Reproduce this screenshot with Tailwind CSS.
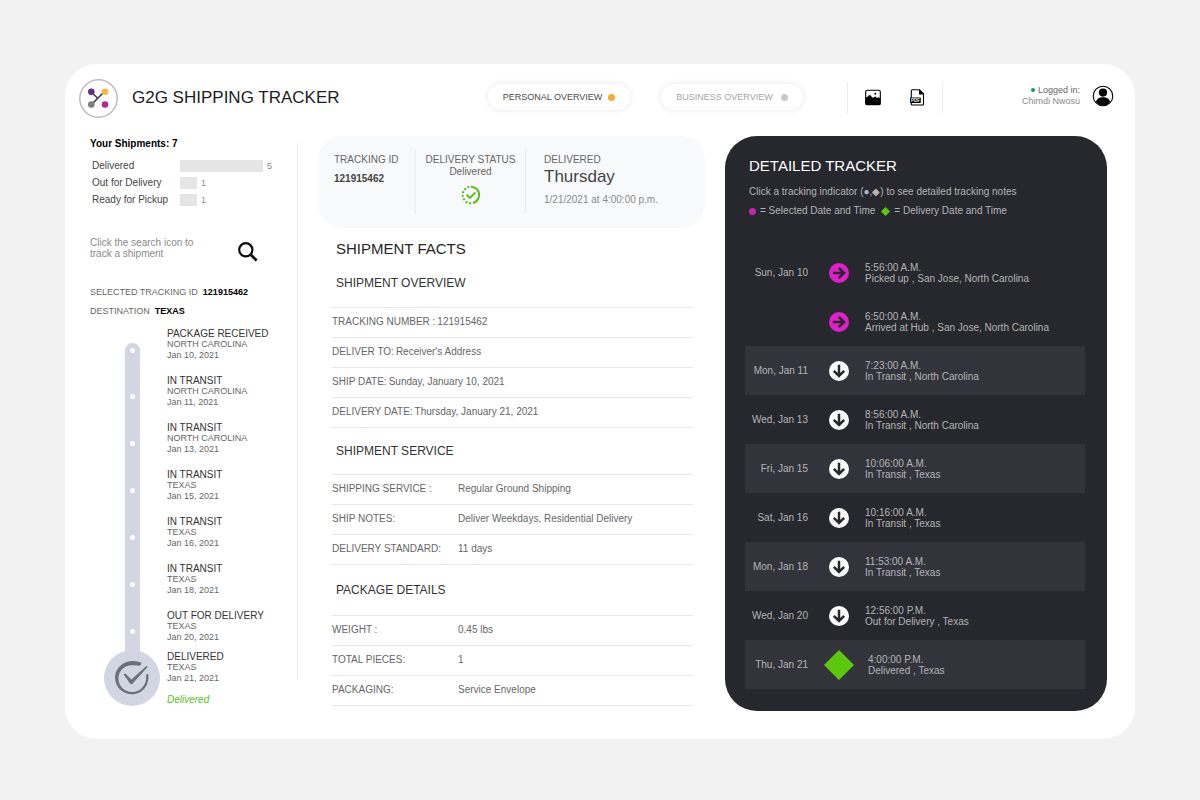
<!DOCTYPE html>
<html lang="en">
<head>
<meta charset="utf-8">
<meta name="viewport" content="width=device-width, initial-scale=1">
<title>G2G Shipping Tracker</title>
<script src="https://cdn.jsdelivr.net/npm/@tailwindcss/browser@4"></script>
</head>
<body class="min-h-screen bg-[#f2f2f2] px-[65px] py-16 font-['Liberation_Sans',Arial,sans-serif] text-[10px] leading-3 text-[#666]">
<svg class="hidden" aria-hidden="true">
  <symbol id="arrow" viewBox="0 0 20 20"><circle cx="10" cy="10" r="10" fill="currentColor"/><path d="M10 3.800V15M4.800 9.800l5.200 5.200 5.200-5.200" fill="none" stroke="#27282d" stroke-width="2.500"/></symbol>
</svg>
<div class="rounded-[32px] bg-white pb-7">
  <header class="mb-1 flex h-[68px] items-center pr-[21px] pl-[14px]">
    <div class="flex w-[409px] shrink-0 items-center gap-[14px]">
      <svg class="size-[39px]" viewBox="0 0 39 39" fill="none" aria-hidden="true">
        <circle cx="19.500" cy="19.500" r="18.700" fill="#fff" stroke="#bdbdc0" stroke-width="1.500"/>
        <path d="M12 13l6.500 6M25.500 12.500L12.500 25.500" stroke="#3d3d46" stroke-width="1.600"/>
        <circle cx="12.300" cy="12.800" r="3.300" fill="#5d2f91"/><circle cx="26" cy="12.800" r="3.300" fill="#fbb540"/>
        <circle cx="12.300" cy="25.500" r="3.300" fill="#7c7c80"/><circle cx="26" cy="25.500" r="3.300" fill="#b02a91"/>
      </svg>
      <h1 class="text-[17px] leading-5 text-[#1c1c1c]">G2G SHIPPING TRACKER</h1>
    </div>
    <nav class="-mt-0.5 flex gap-[31px] text-[9px]">
      <button class="flex h-[26px] w-[142px] items-center justify-center gap-1.5 rounded-full bg-white text-[#4a4a4a] shadow-[0_0_6px_rgba(0,0,0,0.10)]">PERSONAL OVERVIEW<span class="size-[7px] rounded-full bg-[#f9a933]"></span></button>
      <button class="flex h-[26px] w-[142px] items-center justify-center gap-2 rounded-full bg-white text-[#a5a5a8] shadow-[0_0_6px_rgba(0,0,0,0.10)]">BUSINESS OVERVIEW<span class="size-[7px] rounded-full bg-[#c8c8c8]"></span></button>
    </nav>
    <div class="ml-11 flex h-8 w-24 items-center justify-center gap-6 border-x border-[#ececec]">
      <button aria-label="Export as image"><svg class="size-5" viewBox="0 0 20 20"><rect x="2.700" y="2.200" width="14.600" height="14.600" rx="1.500" fill="#fff" stroke="#000" stroke-width="1.100"/><path d="M2.500 9.800C3.500 9.800 4 8.800 5 8.600C5.500 6.800 8 6.800 8.500 8.700L9.800 9.800L12.400 8.600l1.600 1.400 1.600-.8 1.900 1.300v5.500q0 1-1 1H3.500q-1 0-1-1z"/><circle cx="12.300" cy="5.800" r="1"/></svg></button>
      <button aria-label="Export as PDF"><svg class="size-5" viewBox="0 0 20 20"><path d="M4.300 16.800V2.800q0-1 1-1h7.200l4 4v10.200q0 1-1 1H5.300q-1 0-1-1z" fill="#fff" stroke="#000" stroke-width="1.100"/><path d="M12 1.500v5h5z"/><rect x="3" y="9.500" width="10.800" height="5.500" rx=".8"/><text x="8.400" y="13.800" text-anchor="middle" font-size="4.500" font-weight="bold" fill="#fff">PDF</text></svg></button>
    </div>
    <div class="-mt-1 ml-auto flex items-center gap-3">
      <p class="text-right text-[9px] leading-[11px] text-[#8a8a8a]"><span class="mb-px inline-block size-1 rounded-full bg-[#07a650]"></span> <span class="text-[#666]">Logged in:</span><br>Chimdi Nwosu</p>
      <button aria-label="Account"><svg class="size-[22px]" viewBox="0 0 22 22"><circle cx="11" cy="11" r="9.800" fill="#fff" stroke="#000" stroke-width="1.100"/><circle cx="11" cy="7.600" r="4.100"/><path d="M3.800 16.500Q6 11.800 11 12.200q5 -.4 7.200 4.300Q15.500 20.500 11 20.500T3.800 16.500z"/></svg></button>
    </div>
  </header>

  <div class="grid grid-cols-[233px_387fr_382fr] gap-5 pr-7">
    <aside class="flex justify-between">
      <div class="pl-[25px]">
        <h2 class="mt-0.5 mb-[7px] font-bold text-black">Your Shipments: 7</h2>
        <dl class="grid auto-rows-[17px] grid-cols-[88px_1fr] items-center pl-0.5 text-[#444]">
          <dt>Delivered</dt><dd class="flex items-center gap-1 text-[9px] text-[#8c8c8c]"><span class="h-3 bg-[#e5e5e5]" style="width:83px"></span>5</dd>
          <dt>Out for Delivery</dt><dd class="flex items-center gap-1 text-[9px] text-[#8c8c8c]"><span class="h-3 bg-[#e5e5e5]" style="width:17px"></span>1</dd>
          <dt>Ready for Pickup</dt><dd class="flex items-center gap-1 text-[9px] text-[#8c8c8c]"><span class="h-3 bg-[#e5e5e5]" style="width:17px"></span>1</dd>
        </dl>
        <div class="mt-[29px] flex items-start justify-between pr-[14px] leading-[11px] text-[#8a8a8a]">
          <p>Click the search icon to<br>track a shipment</p>
          <button aria-label="Search" class="mt-[5px]"><svg class="size-5" viewBox="0 0 20 20" fill="none" stroke="#0a0a0a"><circle cx="7.800" cy="7.800" r="6.600" stroke-width="2.200"/><path d="M12.600 12.600l6 6" stroke-width="2.800"/></svg></button>
        </div>
        <p class="mt-[24px] text-[9px]">SELECTED TRACKING ID &nbsp;<b class="text-black">121915462</b></p>
        <p class="mt-[7px] text-[9px]">DESTINATION &nbsp;<b class="text-black">TEXAS</b></p>
        <ol class="mt-[11px] pl-[14px] text-[9px] leading-[11px]">
          <li class="flex h-[47px] gap-[7px]"><div class="flex w-[56px] justify-center"><div class="mt-[15px] w-[15px] rounded-t-full bg-[#d2d6e2] pt-[5px]"><div class="mx-auto size-[5px] rounded-full bg-white"></div></div></div><div><h3 class="text-[10px] text-[#333]">PACKAGE RECEIVED</h3>NORTH CAROLINA<br>Jan 10, 2021</div></li>
          <li class="flex h-[47px] gap-[7px]"><div class="flex w-[56px] justify-center"><div class="w-[15px] bg-[#d2d6e2] pt-[19px]"><div class="mx-auto size-[5px] rounded-full bg-white"></div></div></div><div><h3 class="text-[10px] text-[#333]">IN TRANSIT</h3>NORTH CAROLINA<br>Jan 11, 2021</div></li>
          <li class="flex h-[47px] gap-[7px]"><div class="flex w-[56px] justify-center"><div class="w-[15px] bg-[#d2d6e2] pt-[19px]"><div class="mx-auto size-[5px] rounded-full bg-white"></div></div></div><div><h3 class="text-[10px] text-[#333]">IN TRANSIT</h3>NORTH CAROLINA<br>Jan 13, 2021</div></li>
          <li class="flex h-[47px] gap-[7px]"><div class="flex w-[56px] justify-center"><div class="w-[15px] bg-[#d2d6e2] pt-[19px]"><div class="mx-auto size-[5px] rounded-full bg-white"></div></div></div><div><h3 class="text-[10px] text-[#333]">IN TRANSIT</h3>TEXAS<br>Jan 15, 2021</div></li>
          <li class="flex h-[47px] gap-[7px]"><div class="flex w-[56px] justify-center"><div class="w-[15px] bg-[#d2d6e2] pt-[19px]"><div class="mx-auto size-[5px] rounded-full bg-white"></div></div></div><div><h3 class="text-[10px] text-[#333]">IN TRANSIT</h3>TEXAS<br>Jan 16, 2021</div></li>
          <li class="flex h-[47px] gap-[7px]"><div class="flex w-[56px] justify-center"><div class="w-[15px] bg-[#d2d6e2] pt-[19px]"><div class="mx-auto size-[5px] rounded-full bg-white"></div></div></div><div><h3 class="text-[10px] text-[#333]">IN TRANSIT</h3>TEXAS<br>Jan 18, 2021</div></li>
          <li class="flex h-[41px] gap-[7px]"><div class="flex w-[56px] justify-center"><div class="w-[15px] bg-[#d2d6e2] pt-[19px]"><div class="mx-auto size-[5px] rounded-full bg-white"></div></div></div><div><h3 class="text-[10px] text-[#333]">OUT FOR DELIVERY</h3>TEXAS<br>Jan 20, 2021</div></li>
          <li class="flex gap-[7px]"><div class="-mt-px size-[56px] rounded-full bg-[#d2d6e2]"><svg class="size-[56px]" viewBox="0 0 56 56" fill="#6d7078" aria-hidden="true"><path d="M37.500 12.800Q32 10.300 25.500 11.300C17 12.800 11.300 19.500 11 27.500C11.200 37.500 19 44.300 28 44.300C38.500 44.300 46 35 44.200 23.500L42 25C43.500 34.500 36.500 42 28 42C20 42 14 35.500 14.500 27.500C15 20.800 20 16 26.500 15.300Q31 14.800 35 15.800Q37.500 15.500 37.500 12.800z"/><path d="M19.500 24.200l1.900-.8 6 6.200L42.600 15.800l1 1.100L28.200 33.900q-1.400.7-2.400-.6z"/></svg></div><div><h3 class="text-[10px] text-[#333]">DELIVERED</h3>TEXAS<br>Jan 21, 2021<p class="mt-[10px] text-[10px] text-[#55c418] italic">Delivered</p></div></li>
        </ol>
      </div>
      <div class="mt-1.5 mb-[31px] w-px bg-[#ececec]"></div>
    </aside>

    <main>
      <section class="flex h-[92px] items-start rounded-[24px] bg-[#f8f9fb] py-[14px] pr-4">
        <div class="h-16 w-[98px] shrink-0 border-r border-[#ededf0] pt-1 pl-4"><h2>TRACKING ID</h2><p class="mt-[7px] font-bold text-[#444]">121915462</p></div>
        <div class="h-16 w-[110px] shrink-0 border-r border-[#ededf0] pt-1 text-center"><h2>DELIVERY STATUS</h2><p>Delivered</p>
          <svg class="mx-auto mt-[7px] size-5" viewBox="0 0 20 20" fill="none" stroke="#4fc114" stroke-width="2" aria-label="Delivered"><path d="M10 1.700A8.300 8.300 0 0 1 12 18"/><path d="M10 18.300A8.300 8.300 0 0 1 10 1.700" stroke-dasharray="2 1.700"/><path d="M5.600 9.600l3.300 3.300 5.500-5.500"/></svg>
        </div>
        <div class="pt-1 pl-[18px]"><h2>DELIVERED</h2><p class="text-[17px] leading-[22px] text-[#444]">Thursday</p><p class="mt-1.5 text-[#8a8a8a]">1/21/2021 at 4:00:00 p.m.</p></div>
      </section>
      <div class="pr-3 pl-[14px]">
        <h2 class="flex h-[42px] items-center pl-1 text-[15px] text-[#262626]">SHIPMENT FACTS</h2>
        <h3 class="mb-[11px] flex h-[26px] items-center pl-1 text-[12px] text-[#333]">SHIPMENT OVERVIEW</h3>
        <dl class="border-t border-[#e8e8e8]">
          <div class="flex h-[30px] items-center gap-0.5 border-b border-[#e8e8e8] pb-0.5"><dt>TRACKING NUMBER :</dt><dd>121915462</dd></div>
          <div class="flex h-[30px] items-center gap-0.5 border-b border-[#e8e8e8] pb-0.5"><dt>DELIVER TO:</dt><dd>Receiver's Address</dd></div>
          <div class="flex h-[30px] items-center gap-0.5 border-b border-[#e8e8e8] pb-0.5"><dt>SHIP DATE:</dt><dd>Sunday, January 10, 2021</dd></div>
          <div class="flex h-[30px] items-center gap-0.5 border-b border-[#e8e8e8] pb-0.5"><dt>DELIVERY DATE:</dt><dd>Thursday, January 21, 2021</dd></div>
        </dl>
        <h3 class="flex h-[46px] items-center pl-1 text-[12px] text-[#333]">SHIPMENT SERVICE</h3>
        <dl class="border-t border-[#e8e8e8]">
          <div class="flex h-[30px] items-center border-b border-[#e8e8e8] pb-0.5"><dt class="w-[126px]">SHIPPING SERVICE :</dt><dd>Regular Ground Shipping</dd></div>
          <div class="flex h-[30px] items-center border-b border-[#e8e8e8] pb-0.5"><dt class="w-[126px]">SHIP NOTES:</dt><dd>Deliver Weekdays, Residential Delivery</dd></div>
          <div class="flex h-[30px] items-center border-b border-[#e8e8e8] pb-0.5"><dt class="w-[126px]">DELIVERY STANDARD:</dt><dd>11 days</dd></div>
        </dl>
        <h3 class="flex h-[50px] items-center pl-1 text-[12px] text-[#333]">PACKAGE DETAILS</h3>
        <dl class="border-t border-[#e8e8e8]">
          <div class="flex h-[30px] items-center border-b border-[#e8e8e8] pb-0.5"><dt class="w-[126px]">WEIGHT :</dt><dd>0.45 lbs</dd></div>
          <div class="flex h-[30px] items-center border-b border-[#e8e8e8] pb-0.5"><dt class="w-[126px]">TOTAL PIECES:</dt><dd>1</dd></div>
          <div class="flex h-[30px] items-center border-b border-[#e8e8e8] pb-0.5"><dt class="w-[126px]">PACKAGING:</dt><dd>Service Envelope</dd></div>
        </dl>
      </div>
    </main>

    <section class="rounded-[32px] bg-[#27282d] pt-5 pr-[22px] pb-[22px] pl-5 text-[#b4b4b6]">
      <div class="pl-1">
        <h2 class="text-[15px] leading-5 text-white">DETAILED TRACKER</h2>
        <p class="mt-[10px]">Click a tracking indicator (●,◆) to see detailed tracking notes</p>
        <p class="mt-[7px] flex items-center gap-1"><span class="size-[7px] rounded-full bg-[#c724b1]"></span><span>= Selected Date and Time</span><svg class="ml-0.5 size-[9px]" viewBox="0 0 8 8" fill="#5cc80c"><path d="M4 0l4 4-4 4-4-4z"/></svg><span>= Delivery Date and Time</span></p>
      </div>
      <ol class="mt-[31px] leading-[11px]">
        <li class="flex h-[49px] items-center"><time class="w-[63px] text-right">Sun, Jan 10</time><button aria-label="Show notes" class="mr-[11px] ml-4 flex w-[30px] justify-center text-[#e01fc8]"><svg class="size-5 -rotate-90"><use href="#arrow"/></svg></button><p>5:56:00 A.M.<br>Picked up , San Jose, North Carolina</p></li>
        <li class="flex h-[49px] items-center"><span class="w-[63px]"></span><button aria-label="Show notes" class="mr-[11px] ml-4 flex w-[30px] justify-center text-[#e01fc8]"><svg class="size-5 -rotate-90"><use href="#arrow"/></svg></button><p>6:50:00 A.M.<br>Arrived at Hub , San Jose, North Carolina</p></li>
        <li class="flex h-[49px] items-center bg-[#33343b]"><time class="w-[63px] text-right">Mon, Jan 11</time><button aria-label="Show notes" class="mr-[11px] ml-4 flex w-[30px] justify-center text-white"><svg class="size-5"><use href="#arrow"/></svg></button><p>7:23:00 A.M.<br>In Transit , North Carolina</p></li>
        <li class="flex h-[49px] items-center"><time class="w-[63px] text-right">Wed, Jan 13</time><button aria-label="Show notes" class="mr-[11px] ml-4 flex w-[30px] justify-center text-white"><svg class="size-5"><use href="#arrow"/></svg></button><p>8:56:00 A.M.<br>In Transit , North Carolina</p></li>
        <li class="flex h-[49px] items-center bg-[#33343b]"><time class="w-[63px] text-right">Fri, Jan 15</time><button aria-label="Show notes" class="mr-[11px] ml-4 flex w-[30px] justify-center text-white"><svg class="size-5"><use href="#arrow"/></svg></button><p>10:06:00 A.M.<br>In Transit , Texas</p></li>
        <li class="flex h-[49px] items-center"><time class="w-[63px] text-right">Sat, Jan 16</time><button aria-label="Show notes" class="mr-[11px] ml-4 flex w-[30px] justify-center text-white"><svg class="size-5"><use href="#arrow"/></svg></button><p>10:16:00 A.M.<br>In Transit , Texas</p></li>
        <li class="flex h-[49px] items-center bg-[#33343b]"><time class="w-[63px] text-right">Mon, Jan 18</time><button aria-label="Show notes" class="mr-[11px] ml-4 flex w-[30px] justify-center text-white"><svg class="size-5"><use href="#arrow"/></svg></button><p>11:53:00 A.M.<br>In Transit , Texas</p></li>
        <li class="flex h-[49px] items-center"><time class="w-[63px] text-right">Wed, Jan 20</time><button aria-label="Show notes" class="mr-[11px] ml-4 flex w-[30px] justify-center text-white"><svg class="size-5"><use href="#arrow"/></svg></button><p>12:56:00 P.M.<br>Out for Delivery , Texas</p></li>
        <li class="flex h-[49px] items-center bg-[#33343b]"><time class="w-[63px] text-right">Thu, Jan 21</time><button aria-label="Show notes" class="mr-[14px] ml-4 flex w-[30px] justify-center"><svg class="size-[30px]" viewBox="0 0 30 30" fill="#5cc80c"><path d="M15 0l15 15-15 15L0 15z"/></svg></button><p>4:00:00 P.M.<br>Delivered , Texas</p></li>
      </ol>
    </section>
  </div>
</div>
</body>
</html>
